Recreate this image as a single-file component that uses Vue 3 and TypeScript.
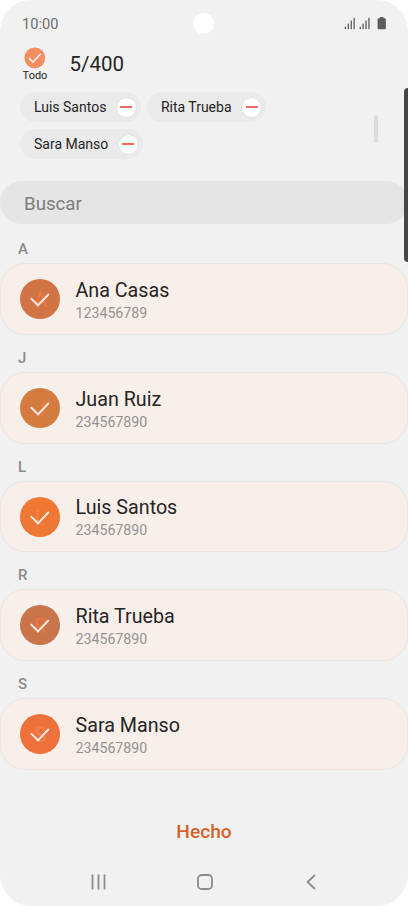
<template>
  <div class="screen">
    <header class="status-bar">
      <span class="time">10:00</span>
      <svg class="status-icons" width="44" height="14" viewBox="0 0 44 14">
        <g v-for="x in [0, 14.8]" :key="x" :transform="`translate(${x} 0)`" fill="#5c5c5c">
          <rect x="0.8" y="9.6" width="1.3" height="2.6" />
          <rect x="3.7" y="6.6" width="1.3" height="5.6" />
          <rect x="6.6" y="3.6" width="1.3" height="8.6" />
          <rect x="9.5" y="0.8" width="1.3" height="11.4" />
        </g>
        <path d="M35.8.6q0-.6.6-.6h2.6q.6 0 .6.6v.7h1.3q.9 0 .9.9v9.1q0 .9-.9.9h-6.4q-.9 0-.9-.9V2.2q0-.9.9-.9h1.3z" fill="#5c5c5c" />
      </svg>
      <span class="camera"></span>
    </header>

    <div class="selection">
      <div class="select-all">
        <svg width="22" height="22" viewBox="0 0 22 22">
          <circle cx="10.8" cy="10.8" r="10.4" fill="#f28e60" />
          <path d="M5 11.1l3.9 3.9 8-8.3" fill="none" stroke="#fdf0ea" stroke-width="1.6" />
        </svg>
        <span>Todo</span>
      </div>
      <span class="count">5/400</span>
    </div>

    <div class="chips">
      <div v-for="chip in chips" :key="chip" class="chip">
        <span>{{ chip }}</span>
        <span class="remove"></span>
      </div>
      <span class="scroll-thumb"></span>
    </div>

    <div class="search">Buscar</div>

    <main class="list">
      <section v-for="c in contacts" :key="c.name">
        <h2 class="letter">{{ c.name[0] }}</h2>
        <div class="card">
          <div class="avatar" :style="{ background: c.color, color: c.initial }">
            <span>{{ c.name[0] }}</span>
            <svg class="check" width="40" height="40" viewBox="0 0 40 40">
              <path d="M10.7 19.1l7.3 7.2L28.8 15" fill="none" stroke="#fbebe3" stroke-width="1.9" />
            </svg>
          </div>
          <div class="info">
            <span class="name">{{ c.name }}</span>
            <span class="phone">{{ c.phone }}</span>
          </div>
        </div>
      </section>
    </main>

    <div class="done">Hecho</div>

    <nav class="nav-bar">
      <svg width="16" height="16" viewBox="0 0 16 16" fill="none" stroke="#8c8c8c" stroke-width="1.8">
        <path d="M1.5.5v15M7.5.5v15M13.5.5v15" />
      </svg>
      <svg width="16" height="16" viewBox="0 0 16 16" fill="none" stroke="#8c8c8c" stroke-width="1.8">
        <rect x="1" y="1" width="14" height="14" rx="3.6" />
      </svg>
      <svg width="16" height="16" viewBox="0 0 16 16" fill="none" stroke="#8c8c8c" stroke-width="1.8">
        <path d="M12.9 1L5.6 8l7.3 7" />
      </svg>
    </nav>

    <span class="edge-handle"></span>
  </div>
</template>

<script setup lang="ts">
interface Contact {
  name: string
  phone: string
  color: string
  initial: string
}

const chips: string[] = ['Luis Santos', 'Rita Trueba', 'Sara Manso']

const contacts: Contact[] = [
  { name: 'Ana Casas', phone: '123456789', color: '#d27346', initial: '#ee7b42' },
  { name: 'Juan Ruiz', phone: '234567890', color: '#d47b40', initial: '#ef7748' },
  { name: 'Luis Santos', phone: '234567890', color: '#ee7733', initial: '#f0854a' },
  { name: 'Rita Trueba', phone: '234567890', color: '#c9744a', initial: '#ee7540' },
  { name: 'Sara Manso', phone: '234567890', color: '#ee703b', initial: '#f28350' },
]
</script>

<style>
body { margin: 0; background: #fff; }
</style>

<style scoped>
.screen {
  position: relative;
  display: flex;
  flex-direction: column;
  box-sizing: border-box;
  width: 408px;
  height: 906px;
  overflow: hidden;
  border-radius: 31px;
  background: #f1f1f1;
  color: #252525;
  font-family: Roboto, sans-serif;
}
.status-bar {
  position: relative;
  display: flex;
  flex: none;
  justify-content: space-between;
  align-items: center;
  height: 46px;
  padding: 0 20px 0 22px;
}
.time { padding-top: 1px; font-size: 14.6px; color: #6b6b6b; }
.status-icons { margin-top: 1px; }
.camera {
  position: absolute;
  top: 13px;
  left: 193px;
  width: 21px;
  height: 21px;
  border-radius: 50%;
  background: #fff;
}
.selection { display: flex; flex: none; height: 46px; padding-left: 15px; }
.select-all {
  display: flex;
  flex-direction: column;
  align-items: center;
  width: 40px;
  padding-top: 1px;
  font-size: 11px;
  line-height: 13px;
}
.count { margin-left: 14.5px; font-size: 20.5px; line-height: 36px; }
.chips {
  position: relative;
  display: flex;
  flex: none;
  flex-wrap: wrap;
  align-content: flex-start;
  gap: 7px 6px;
  box-sizing: border-box;
  height: 88.5px;
  padding: 0 120px 0 20px;
}
.chip {
  display: flex;
  align-items: center;
  box-sizing: border-box;
  height: 30px;
  padding: 0 5px 0 14px;
  gap: 10.5px;
  border-radius: 15px;
  background: #eaeaea;
  font-size: 14px;
}
.remove {
  display: flex;
  align-items: center;
  justify-content: center;
  width: 19px;
  height: 19px;
  border-radius: 50%;
  background: #fff;
  box-shadow: 0 0 1px 0.5px #dcdcdc;
}
.remove::before { content: ''; width: 12px; height: 1.5px; background: #ef6a6a; }
.scroll-thumb {
  position: absolute;
  top: 23px;
  left: 374px;
  width: 4px;
  height: 28px;
  border-radius: 2px;
  background: #dcdcdc;
}
.search {
  flex: none;
  height: 43.5px;
  padding-left: 24px;
  border-radius: 22px;
  background: #e5e5e5;
  color: #7d7d7d;
  font-size: 18.7px;
  line-height: 46px;
}
.list { flex: none; padding-top: 2.3px; }
.letter {
  box-sizing: border-box;
  height: 37px;
  margin: 0;
  padding: 13px 0 0 18px;
  color: #8b8b8b;
  font-size: 15px;
  font-weight: 500;
  line-height: 20px;
}
.card {
  display: flex;
  align-items: center;
  box-sizing: border-box;
  height: 71.7px;
  padding-left: 19px;
  border: 1px solid #e9e5e3;
  border-radius: 25px;
  background: #f9efea;
}
.avatar {
  position: relative;
  display: flex;
  align-items: center;
  justify-content: center;
  width: 40px;
  height: 40px;
  border-radius: 50%;
  font-size: 20px;
}
.avatar span { padding: 2px 0 0 1px; }
.check { position: absolute; top: 0; left: 0; }
.info { display: flex; flex-direction: column; margin-left: 15.5px; padding-top: 4.4px; }
.name { font-size: 19.7px; line-height: 24px; }
.phone { color: #929292; font-size: 14.2px; line-height: 21px; }
.done {
  flex: none;
  margin-top: 50px;
  color: #d6622b;
  font-size: 19.2px;
  font-weight: 500;
  line-height: 24px;
  text-align: center;
}
.nav-bar {
  display: flex;
  justify-content: space-between;
  padding: 30px 90px 0 91px;
}
.edge-handle {
  position: absolute;
  top: 88px;
  left: 404px;
  width: 12px;
  height: 174px;
  border-radius: 4px;
  background: rgba(45, 45, 45, 0.87);
}
</style>
